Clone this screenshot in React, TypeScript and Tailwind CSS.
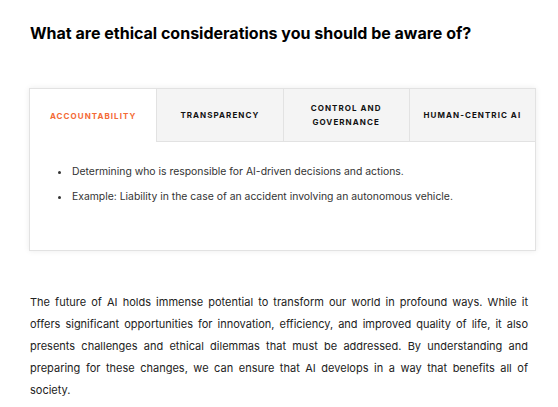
import { useState } from "react";

const tabs = [
  {
    key: "accountability",
    label: "ACCOUNTABILITY",
    items: [
      "Determining who is responsible for AI-driven decisions and actions.",
      "Example: Liability in the case of an accident involving an autonomous vehicle.",
    ],
  },
  { key: "transparency", label: "TRANSPARENCY", items: [] },
  { key: "control", label: "CONTROL AND GOVERNANCE", items: [] },
  { key: "human", label: "HUMAN-CENTRIC AI", items: [] },
];

export default function App() {
  const [active, setActive] = useState("accountability");
  const current = tabs.find((t) => t.key === active);

  return (
    <div className="min-h-screen bg-white px-[30px] pt-[22px] font-['Inter',sans-serif]">
      <h2 className="text-[16px] font-bold leading-[22px] text-black">
        What are ethical considerations you should be aware of?
      </h2>

      <div className="mt-[44px] ml-[-1px] w-[507px] border border-[#e2e2e2] bg-white shadow-[0_0_6px_rgba(0,0,0,0.08)]">
        <div className="grid grid-cols-4">
          {tabs.map((tab, i) => (
            <button
              key={tab.key}
              onClick={() => setActive(tab.key)}
              className={`flex h-[53px] items-center justify-center px-1 text-center text-[8px] font-bold leading-[14px] tracking-[1.05px] ${
                i > 0 ? "border-l border-[#e2e2e2]" : ""
              } ${
                active === tab.key
                  ? "bg-white text-[#f46a35]"
                  : "border-b border-b-[#e2e2e2] bg-[#f4f4f4] text-[#111]"
              }`}
            >
              {tab.key === "control" ? (
                <span>
                  CONTROL AND
                  <br />
                  GOVERNANCE
                </span>
              ) : (
                tab.label
              )}
            </button>
          ))}
        </div>
        <ul className="h-[108px] list-disc pl-[41px] pt-[23px] text-[10.4px] leading-[14px] text-[#333]">
          {current?.items.map((item) => (
            <li key={item} className="mb-[11px] pl-[1px]">
              {item}
            </li>
          ))}
        </ul>
      </div>

      <p className="mt-[40px] text-justify text-[11px] leading-[22px] text-[#222]">
        The future of AI holds immense potential to transform our world in profound ways. While it
        offers significant opportunities for innovation, efficiency, and improved quality of life, it
        also presents challenges and ethical dilemmas that must be addressed. By understanding and
        preparing for these changes, we can ensure that AI develops in a way that benefits all of
        society.
      </p>
    </div>
  );
}
